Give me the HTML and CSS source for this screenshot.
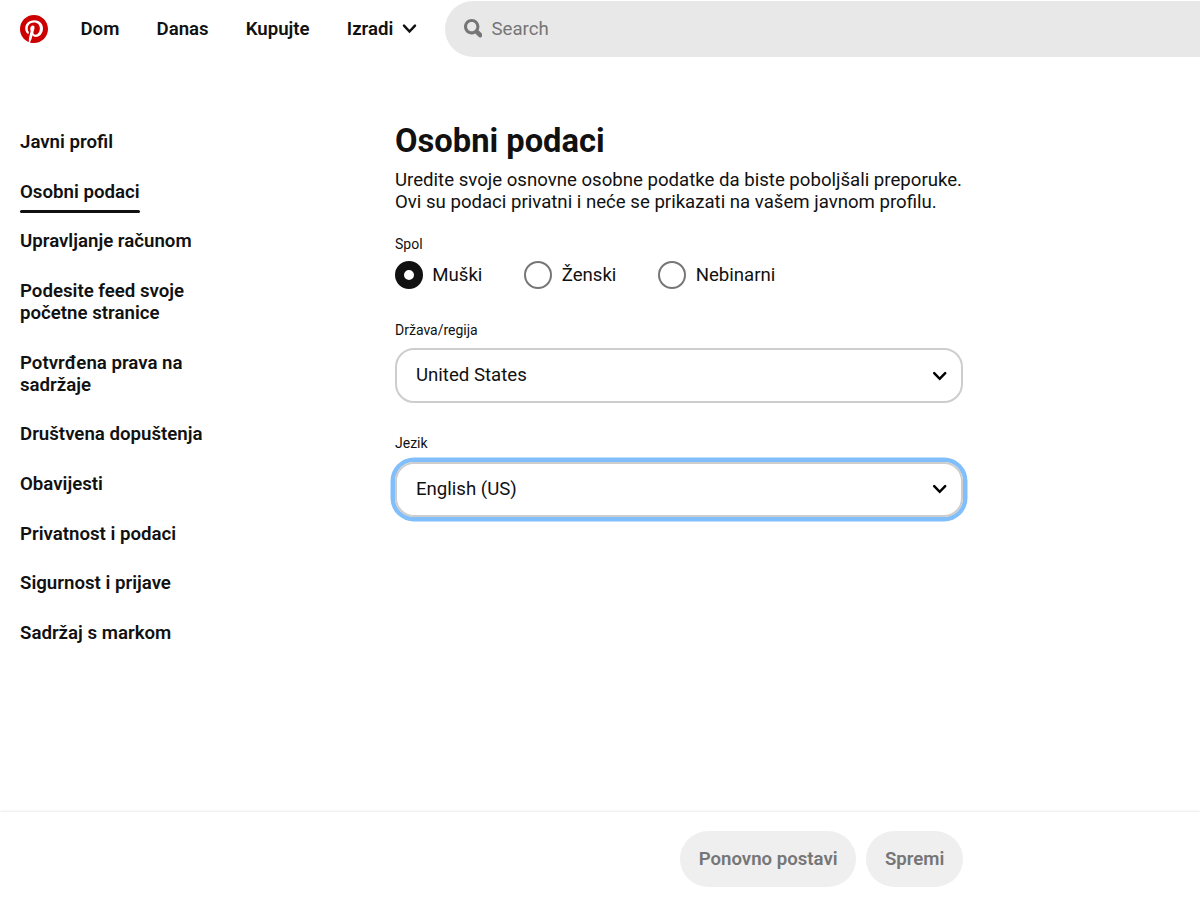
FILE: index.html
```html
<!DOCTYPE html>
<html lang="hr">
<head>
<meta charset="utf-8">
<title>Osobni podaci</title>
<link rel="stylesheet" href="styles.css">
</head>
<body>
<div class="page">
  <header class="topbar">
    <svg class="logo" viewBox="0 0 24 24"><circle cx="12" cy="12" r="11.5" fill="#fff"/><path fill="#cc0000" d="M0 12c0 5.123 3.211 9.497 7.73 11.218-.11-.937-.227-2.482.025-3.566.217-.932 1.401-5.938 1.401-5.938s-.357-.715-.357-1.774c0-1.66.962-2.9 2.161-2.9 1.02 0 1.512.765 1.512 1.682 0 1.025-.653 2.557-.99 3.978-.281 1.189.597 2.159 1.769 2.159 2.123 0 3.756-2.239 3.756-5.471 0-2.861-2.056-4.86-4.991-4.86-3.398 0-5.393 2.549-5.393 5.184 0 1.027.395 2.127.889 2.726a.36.36 0 0 1 .083.343c-.091.378-.293 1.189-.332 1.355-.053.218-.173.265-.4.159-1.492-.694-2.424-2.875-2.424-4.627 0-3.769 2.737-7.229 7.892-7.229 4.144 0 7.365 2.953 7.365 6.899 0 4.117-2.595 7.431-6.199 7.431-1.211 0-2.348-.63-2.738-1.373 0 0-.599 2.282-.744 2.840-.282 1.084-1.064 2.456-1.549 3.235C9.584 23.815 10.770 24 12 24c6.627 0 12-5.373 12-12S18.627 0 12 0 0 5.373 0 12"/></svg>
    <nav class="nav">
      <a class="nav-link">Dom</a>
      <a class="nav-link">Danas</a>
      <a class="nav-link">Kupujte</a>
      <a class="nav-link">Izradi
        <svg class="nav-chevron" viewBox="0 0 15 11"><path d="M2 2.700 L7.500 8.500 L13 2.700"/></svg>
      </a>
    </nav>
    <div class="search">
      <svg class="search-icon" viewBox="0 0 24 24"><path d="M10 16c-3.310 0-6-2.690-6-6s2.690-6 6-6 6 2.690 6 6-2.690 6-6 6m13.120 2.880-4.260-4.260A9.842 9.842 0 0 0 20 10c0-5.520-4.480-10-10-10S0 4.480 0 10s4.480 10 10 10c1.670 0 3.240-.410 4.620-1.140l4.260 4.260a3 3 0 0 0 4.240 0 3 3 0 0 0 0-4.240"/></svg>
      <span>Search</span>
    </div>
  </header>
  <div class="body">
    <aside class="sidebar">
      <a class="side-link">Javni profil</a>
      <a class="side-link active">Osobni podaci</a>
      <a class="side-link">Upravljanje računom</a>
      <a class="side-link">Podesite feed svoje<br>početne stranice</a>
      <a class="side-link">Potvrđena prava na<br>sadržaje</a>
      <a class="side-link">Društvena dopuštenja</a>
      <a class="side-link">Obavijesti</a>
      <a class="side-link">Privatnost i podaci</a>
      <a class="side-link">Sigurnost i prijave</a>
      <a class="side-link">Sadržaj s markom</a>
    </aside>
    <main class="content">
      <h1 class="title">Osobni podaci</h1>
      <p class="lead">Uredite svoje osnovne osobne podatke da biste poboljšali preporuke.<br>Ovi su podaci privatni i neće se prikazati na vašem javnom profilu.</p>
      <div class="label label-gender">Spol</div>
      <div class="radios">
        <div class="radio"><span class="dot checked"></span>Muški</div>
        <div class="radio"><span class="dot"></span>Ženski</div>
        <div class="radio"><span class="dot"></span>Nebinarni</div>
      </div>
      <div class="label label-country">Država/regija</div>
      <div class="select">United States
        <svg class="chevron" viewBox="0 0 15 11"><path d="M2.200 3.200 L7.700 8.800 L13.200 3.200"/></svg>
      </div>
      <div class="label label-language">Jezik</div>
      <div class="select focused">English (US)
        <svg class="chevron" viewBox="0 0 15 11"><path d="M2.200 3.200 L7.700 8.800 L13.200 3.200"/></svg>
      </div>
    </main>
  </div>
  <footer class="footer">
    <div class="button">Ponovno postavi</div>
    <div class="button">Spremi</div>
  </footer>
</div>
</body>
</html>
```
FILE: styles.css
```css
* { box-sizing: border-box; }
body {
  margin: 0;
  font-family: Roboto, sans-serif;
  font-size: 18.62px;
  line-height: 22px;
  color: #111;
  background: #fff;
}
.page { display: flex; flex-direction: column; height: 898px; overflow: hidden; }
.topbar { display: flex; align-items: center; height: 57px; padding-left: 20px; flex: none; }
.logo { width: 28px; height: 28px; margin-right: 32.500px; flex: none; }
.nav { display: flex; gap: 37.200px; width: 364.500px; flex: none; font-weight: 600; }
.nav-link { display: flex; align-items: center; white-space: nowrap; }
.nav-chevron { width: 15px; height: 11px; margin-left: 9px; }
.nav-chevron path, .chevron path {
  fill: none; stroke: #111; stroke-width: 2.500;
  stroke-linecap: round; stroke-linejoin: miter;
}
.search {
  flex: 1; height: 56px; display: flex; align-items: center; gap: 9.500px;
  padding-left: 18.500px; border-radius: 28px 0 0 28px;
  background: #e8e8e8; color: #767676;
}
.search-icon { width: 18.500px; height: 18.500px; fill: #767676; }
.body { display: flex; flex: 1; }
.sidebar {
  width: 395px; padding: 75px 0 0 20px; flex: none;
  display: flex; flex-direction: column; align-items: flex-start;
  font-size: 18.660px; font-weight: 600; line-height: 21.900px;
}
.side-link { position: relative; padding-bottom: 27.800px; }
.active::after {
  content: ""; position: absolute; left: 0; right: 0; top: 28.300px;
  height: 3px; border-radius: 2px; background: #111;
}
.content { width: 568px; padding-top: 64px; }
.title { margin: 0; font-size: 32.700px; line-height: 40px; font-weight: 700; }
.lead { margin: 8px 0 0; line-height: 22px; white-space: nowrap; }
.label { font-size: 14px; line-height: 18px; }
.label-gender { margin-top: 22px; }
.radios { display: flex; gap: 42px; margin-top: 8px; }
.radio { display: flex; align-items: center; gap: 9.300px; height: 28px; }
.dot { width: 28px; height: 28px; border: 2px solid #767676; border-radius: 50%; }
.checked { border: 9px solid #111; }
.label-country { margin-top: 32px; }
.select {
  display: flex; align-items: center; justify-content: space-between;
  height: 55px; margin-top: 9px; padding: 0 14px 1px 19px;
  border: 2px solid #cdcdcd; border-radius: 19px;
}
.chevron { width: 15px; height: 11px; }
.chevron path { stroke: #000; }
.label-language { margin-top: 31px; }
.focused { margin-top: 9.500px; box-shadow: 0 0 0 4.500px #81befc; }
.footer {
  height: 86px; flex: none; display: flex; gap: 10px; align-items: center;
  justify-content: flex-end; padding: 8px 237px 0 0;
  box-shadow: 0 0 3px rgba(0, 0, 0, .15);
}
.button {
  height: 56px; padding: 0 18.700px; border-radius: 28px; line-height: 56px;
  background: #efefef; color: #767676; font-weight: 600;
}
```
